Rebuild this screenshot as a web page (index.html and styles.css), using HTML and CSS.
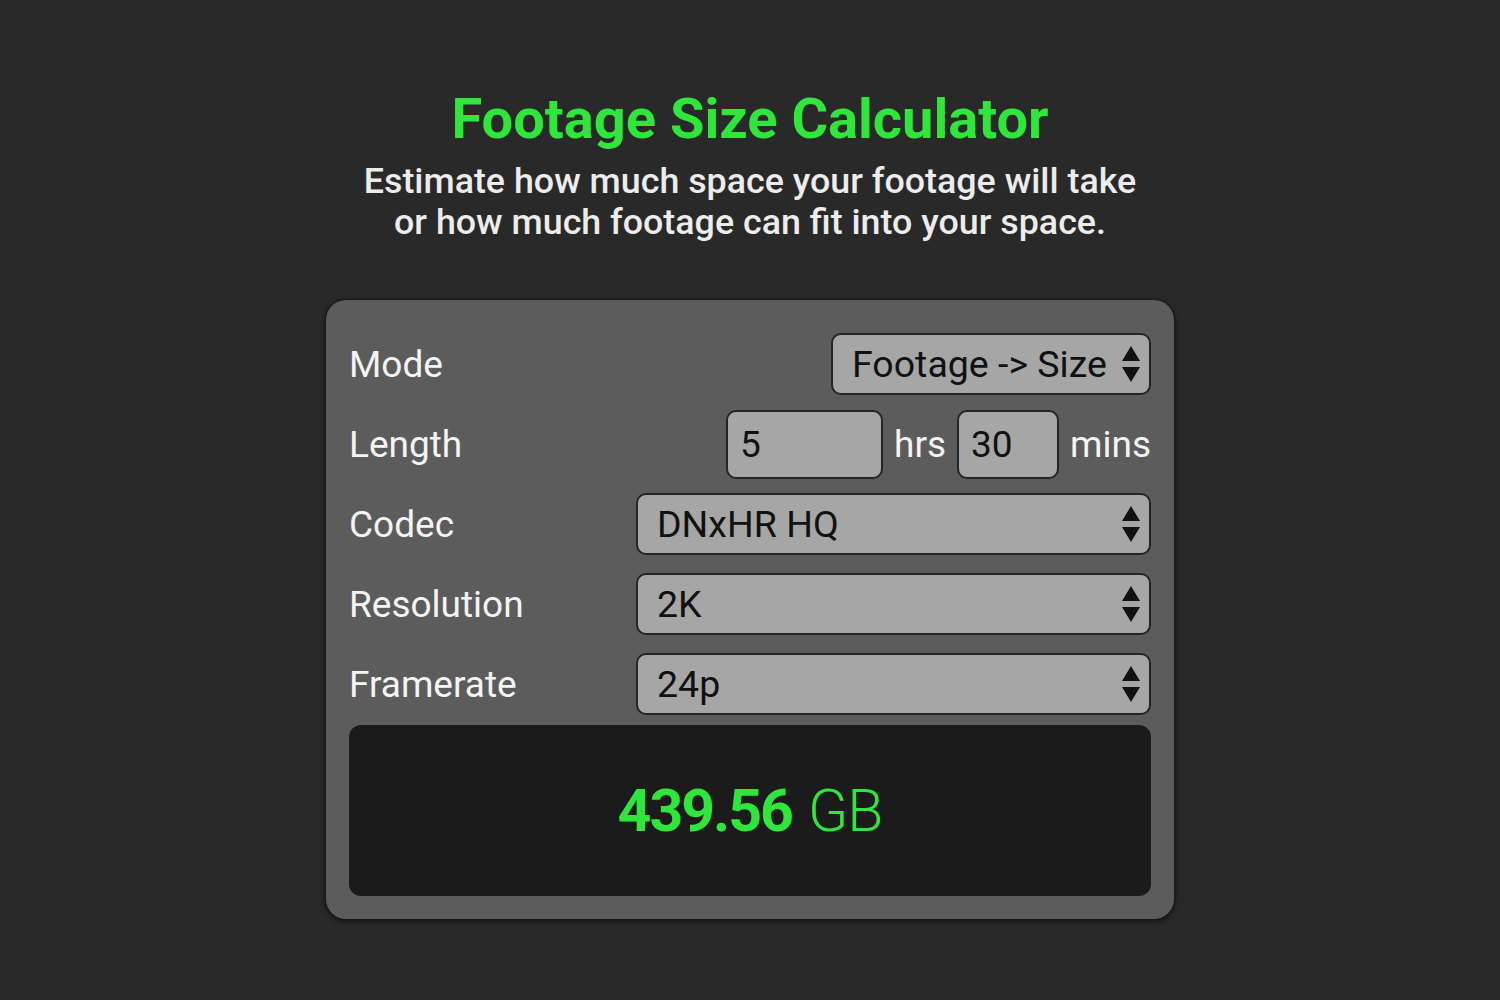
FILE: index.html
```html
<!DOCTYPE html>
<html>
<head>
<meta charset="utf-8">
<link rel="stylesheet" href="styles.css">
</head>
<body>
<main class="page">
  <header class="intro">
    <h1 class="title">Footage Size Calculator</h1>
    <p class="subtitle">Estimate how much space your footage will take<br>or how much footage can fit into your space.</p>
  </header>
  <section class="card">
    <div class="row">
      <span class="label">Mode</span>
      <div class="select select-mode"><span>Footage -&gt; Size</span>
        <svg class="arrows" viewBox="0 0 20 40" width="20" height="40"><polygon points="10,2 19,17 1,17" /><polygon points="1,23 19,23 10,38" /></svg>
      </div>
    </div>
    <div class="row">
      <span class="label">Length</span>
      <div class="length">
        <div class="input input-hrs">5</div>
        <span class="unit">hrs</span>
        <div class="input input-mins">30</div>
        <span class="unit">mins</span>
      </div>
    </div>
    <div class="row">
      <span class="label">Codec</span>
      <div class="select select-wide"><span>DNxHR HQ</span>
        <svg class="arrows" viewBox="0 0 20 40" width="20" height="40"><polygon points="10,2 19,17 1,17" /><polygon points="1,23 19,23 10,38" /></svg>
      </div>
    </div>
    <div class="row">
      <span class="label">Resolution</span>
      <div class="select select-wide"><span>2K</span>
        <svg class="arrows" viewBox="0 0 20 40" width="20" height="40"><polygon points="10,2 19,17 1,17" /><polygon points="1,23 19,23 10,38" /></svg>
      </div>
    </div>
    <div class="row">
      <span class="label">Framerate</span>
      <div class="select select-wide"><span>24p</span>
        <svg class="arrows" viewBox="0 0 20 40" width="20" height="40"><polygon points="10,2 19,17 1,17" /><polygon points="1,23 19,23 10,38" /></svg>
      </div>
    </div>
    <div class="result">
      <span class="value">439.56</span><span class="unit-gb">GB</span>
    </div>
  </section>
</main>
</body>
</html>
```

FILE: styles.css
```css
* { box-sizing: border-box; }
html, body { margin: 0; padding: 0; }
body {
  background: #292929;
  font-family: Roboto, "Liberation Sans", sans-serif;
  width: 1500px;
  height: 1000px;
  overflow: hidden;
}
.page {
  display: flex;
  flex-direction: column;
  align-items: center;
}
.intro {
  text-align: center;
  padding-top: 84px;
}
.title {
  margin: 0;
  color: #2fe63a;
  font-weight: 700;
  font-size: 56px;
  line-height: 70px;
}
.subtitle {
  margin: 7px 0 0;
  color: #ececec;
  font-size: 35.8px;
  font-weight: 500;
  line-height: 41px;
}
.card {
  margin-top: 57px;
  width: 848px;
  background: #5c5c5c;
  border-radius: 20px;
  padding: 24px 23px 23px;
  box-shadow: 0 2px 6px rgba(0,0,0,0.6), 0 0 2px rgba(0,0,0,0.8);
}
.row {
  height: 80px;
  display: flex;
  align-items: center;
  justify-content: space-between;
}
.label {
  color: #f4f4f4;
  font-size: 37px;
}
.select {
  height: 62px;
  background: #a6a6a6;
  border: 2px solid #252525;
  border-radius: 10px;
  display: flex;
  align-items: center;
  justify-content: space-between;
  padding: 0 8px 0 19px;
  color: #111;
  font-size: 37.5px;
}
.select-mode { width: 320px; }
.select-wide { width: 515px; }
.arrows { fill: #111; flex: none; }
.select-mode .arrows { margin-left: 8px; }
.length {
  display: flex;
  align-items: center;
}
.input {
  height: 69px;
  background: #a6a6a6;
  border: 2px solid #252525;
  border-radius: 10px;
  display: flex;
  align-items: center;
  padding-left: 12px;
  color: #111;
  font-size: 37px;
}
.input-hrs { width: 157px; }
.input-mins { width: 102px; }
.unit {
  color: #f4f4f4;
  font-size: 37px;
  margin: 0 11px;
}
.unit:last-child { margin-right: 0; }
.result {
  margin-top: 1px;
  height: 171px;
  background: #1b1b1b;
  border-radius: 12px;
  display: flex;
  align-items: center;
  justify-content: center;
  color: #2fe63a;
  font-size: 59px;
}
.value {
  font-weight: 700;
  letter-spacing: -2px;
}
.unit-gb {
  font-weight: 300;
  margin-left: 16px;
  letter-spacing: -1px;
}
```
